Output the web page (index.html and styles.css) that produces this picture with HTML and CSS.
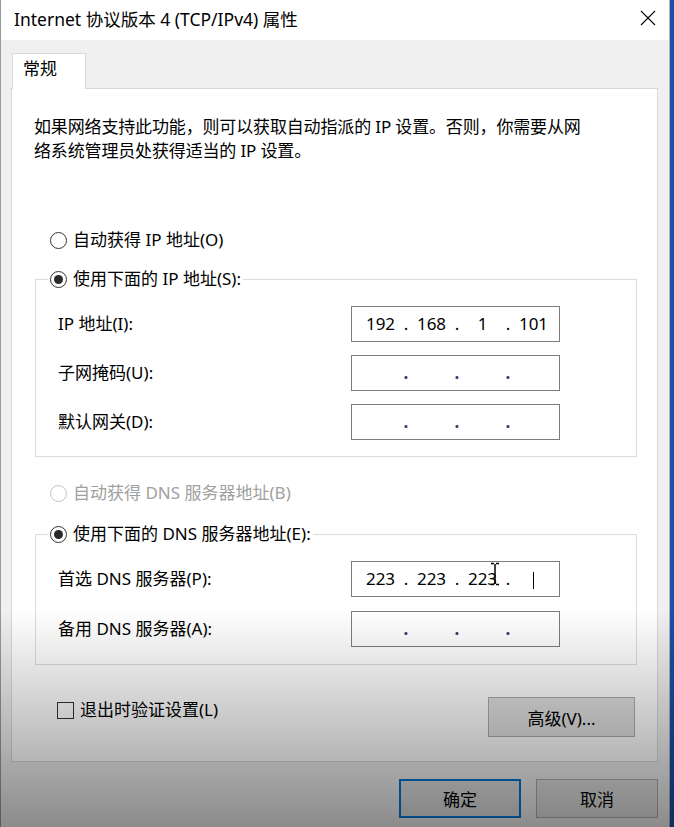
FILE: index.html
```html
<!DOCTYPE html>
<html>
	<head>
		<meta charset="utf-8" />
		<title>Internet 协议版本 4 (TCP/IPv4) 属性</title>
		<link rel="stylesheet" href="styles.css">
	</head>
	<body>
		<div class="window">
			<div class="titlebar">
				<span class="title">Internet 协议版本 4 (TCP/IPv4) 属性</span>
				<svg class="close" width="16" height="16" viewBox="0 0 16 16">
					<path d="M1 1 L15 15 M15 1 L1 15" stroke="#000" stroke-width="1.1" fill="none" />
				</svg>
			</div>
			<div class="client">
				<div class="tabs"><div class="tab">常规</div></div>
				<div class="panel">
					<p class="intro">如果网络支持此功能，则可以获取自动指派的 IP 设置。否则，你需要从网<br>络系统管理员处获得适当的 IP 设置。</p>

					<label class="option opt-auto-ip"><span class="radio"></span>自动获得 IP 地址(O)</label>
					<div class="group">
						<label class="option legend"><span class="radio checked"></span>使用下面的 IP 地址(S):</label>
						<div class="rows">
							<div class="row">
								<span>IP 地址(I):</span>
								<div class="ipbox">
									<span class="seg">192</span><span class="dot">.</span><span class="seg">168</span><span class="dot">.</span><span class="seg">1</span><span class="dot">.</span><span class="seg">101</span>
								</div>
							</div>
							<div class="row">
								<span>子网掩码(U):</span>
								<div class="ipbox empty">
									<span class="seg"></span><span class="dot">.</span><span class="seg"></span><span class="dot">.</span><span class="seg"></span><span class="dot">.</span><span class="seg"></span>
								</div>
							</div>
							<div class="row">
								<span>默认网关(D):</span>
								<div class="ipbox empty">
									<span class="seg"></span><span class="dot">.</span><span class="seg"></span><span class="dot">.</span><span class="seg"></span><span class="dot">.</span><span class="seg"></span>
								</div>
							</div>
						</div>
					</div>

					<label class="option opt-auto-dns disabled"><span class="radio"></span>自动获得 DNS 服务器地址(B)</label>
					<div class="group group-dns">
						<label class="option legend"><span class="radio checked"></span>使用下面的 DNS 服务器地址(E):</label>
						<div class="rows">
							<div class="row">
								<span>首选 DNS 服务器(P):</span>
								<div class="ipbox focus">
									<span class="seg">223</span><span class="dot">.</span><span class="seg">223</span><span class="dot">.</span><span class="seg">223</span><span class="dot">.</span><span class="seg"><i class="caret"></i></span>
									<svg class="ibeam" width="10" height="24" viewBox="0 0 10 24">
										<path d="M1 1.5 H4 M6 1.5 H9 M5 2 V22 M1 22.5 H4 M6 22.5 H9" stroke="#000" stroke-width="1.5" fill="none" />
									</svg>
								</div>
							</div>
							<div class="row">
								<span>备用 DNS 服务器(A):</span>
								<div class="ipbox empty">
									<span class="seg"></span><span class="dot">.</span><span class="seg"></span><span class="dot">.</span><span class="seg"></span><span class="dot">.</span><span class="seg"></span>
								</div>
							</div>
						</div>
					</div>

					<div class="footer-row">
						<label class="check"><span class="box"></span>退出时验证设置(L)</label>
						<button class="btn btn-adv">高级(V)...</button>
					</div>
				</div>
				<div class="buttons">
					<button class="btn default">确定</button>
					<button class="btn">取消</button>
				</div>
			</div>
		</div>
		<div class="shade"></div>
	</body>
</html>
```

FILE: styles.css
```css
* {
	padding: 0;
	margin: 0;
	box-sizing: border-box;
}

body {
	background-color: #1c4fa6;
	font-family: "Noto Sans", "Noto Sans CJK SC", sans-serif;
	font-size: 17px;
	color: #000;
	overflow: hidden;
}

.window {
	width: 670px;
	height: 827px;
	background: #f0f0f0;
	border-left: 1px solid #9a9a9a;
	border-right: 1px solid #b5b5b5;
}

.titlebar {
	height: 40px;
	background: #fff;
	display: flex;
	align-items: center;
	justify-content: space-between;
	padding: 0 13px 4px 13px;
}

.title {
	font-size: 17.5px;
}

.client {
	padding: 13px 11px 0 10px;
}

.tabs {
	display: flex;
}

.tab {
	position: relative;
	width: 74px;
	height: 36px;
	margin: 0 0 -1px 1px;
	padding: 3px 0 0 10px;
	line-height: 24px;
	background: #fff;
	border: 1px solid #d9d9d9;
	border-bottom: none;
}

.panel {
	background: #fff;
	border: 1px solid #d9d9d9;
	padding: 26px 20px 24px 22px;
}

.intro {
	line-height: 24px;
	letter-spacing: -0.15px;
}

.option {
	display: flex;
	align-items: center;
	gap: 6px;
	height: 24px;
	line-height: 24px;
}

.radio {
	width: 17px;
	height: 17px;
	border: 1px solid #333;
	border-radius: 50%;
	display: flex;
	align-items: center;
	justify-content: center;
}

.radio.checked::after {
	content: "";
	width: 9px;
	height: 9px;
	border-radius: 50%;
	background: #2a2a2a;
}

.opt-auto-ip {
	margin: 65px 0 0 16px;
}

.opt-auto-dns {
	margin: 24px 0 0 16px;
}

.disabled {
	color: #a0a0a0;
}

.disabled .radio {
	border-color: #c2c2c2;
}

.group {
	border: 1px solid #dcdcdc;
	margin: 27px 0 0 1px;
	padding: 0 76px 16px 22px;
}

.group-dns {
	margin-top: 29px;
	padding-bottom: 17px;
}

.legend {
	width: max-content;
	margin: -13px 0 0 -10px;
	padding: 0 2px;
	background: #fff;
}

.rows {
	display: flex;
	flex-direction: column;
	gap: 13px;
	margin-top: 15px;
}

.group-dns .rows {
	gap: 14px;
}

.row {
	display: flex;
	align-items: center;
	justify-content: space-between;
	line-height: 24px;
}

.ipbox {
	position: relative;
	width: 209px;
	height: 36px;
	border: 1px solid #7d7d7d;
	background: #fff;
	display: flex;
	align-items: center;
	padding: 0 4px 0 8px;
}

.seg {
	width: 41px;
	text-align: center;
}

.dot {
	width: 10px;
	text-align: center;
}

.empty .dot {
	color: #34406a;
	font-weight: bold;
}

.caret {
	display: inline-block;
	width: 1px;
	height: 17px;
	background: #000;
	vertical-align: middle;
}

.ibeam {
	position: absolute;
	left: 138px;
	top: 0;
}

.footer-row {
	display: flex;
	justify-content: space-between;
	align-items: flex-start;
	margin: 32px 2px 0 23px;
}

.check {
	display: flex;
	align-items: center;
	gap: 6px;
	margin-top: 1px;
	line-height: 24px;
}

.box {
	width: 17px;
	height: 17px;
	border: 1px solid #333;
}

.btn {
	height: 40px;
	width: 147px;
	background: #e1e1e1;
	border: 1px solid #adadad;
	font: inherit;
	color: #000;
}

.buttons {
	display: flex;
	justify-content: flex-end;
	gap: 15px;
	margin-top: 17px;
}

.buttons .btn {
	width: 122px;
	height: 39px;
}

.btn.default {
	border: 2px solid #0078d7;
}

.shade {
	position: fixed;
	inset: 0;
	pointer-events: none;
	background: linear-gradient(to bottom, rgba(0,0,0,0) 610px, rgba(0,0,0,.42) 827px);
}
```
